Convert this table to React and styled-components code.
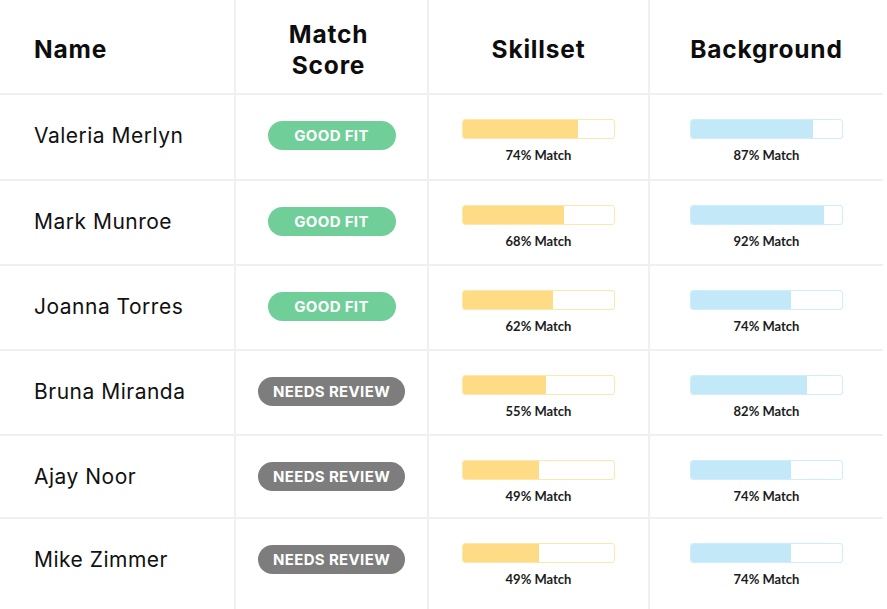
import React from "react";
import styled, { createGlobalStyle } from "styled-components";

const Global = createGlobalStyle`
  html, body { margin: 0; padding: 0; background: #ffffff; }
  body { font-family: "Inter", "Liberation Sans", sans-serif; color: #111111; }
`;

const Table = styled.div`
  display: grid;
  grid-template-columns: 234px 191px 219px 233px;
  grid-template-rows: 93px 84px 83px 83px 83px 81px 90px;
  gap: 2px;
  background: #f0f0f0;
  width: max-content;
`;

const HeadCell = styled.div`
  background: #ffffff;
  display: flex;
  align-items: center;
  justify-content: ${(p) => (p.$left ? "flex-start" : "center")};
  padding-left: ${(p) => (p.$left ? "34px" : "0")};
  padding-right: ${(p) => p.$shift || "0"};
  padding-top: 6px;
  font-size: 24.5px;
  font-weight: 700;
  letter-spacing: 0.8px;
  line-height: 31px;
  text-align: center;
  color: #0d0d0d;
`;

const NameCell = styled.div`
  background: #ffffff;
  padding: 28px 0 0 34px;
  font-size: 21px;
  line-height: 25px;
  letter-spacing: 0.5px;
  font-weight: 400;
  color: #111111;
`;

const Cell = styled.div`
  background: #ffffff;
  display: flex;
  flex-direction: column;
  align-items: center;
  padding-top: ${(p) => p.$pt};
`;

const Pill = styled.span`
  display: inline-flex;
  align-items: center;
  justify-content: center;
  height: 29px;
  min-width: 128px;
  padding: 0 15px;
  box-sizing: border-box;
  border-radius: 14.5px;
  background: ${(p) => (p.$good ? "#70cf98" : "#7d7d7d")};
  color: #ffffff;
  font-size: 15px;
  font-weight: 700;
  letter-spacing: 0.35px;
`;

const Track = styled.div`
  width: 153px;
  height: 20px;
  box-sizing: border-box;
  border: 1px solid ${(p) => (p.$tone === "yellow" ? "#fde7ad" : "#cdeefc")};
  border-radius: 3px;
  background: #ffffff;
  overflow: hidden;
`;

const Fill = styled.div`
  height: 100%;
  background: ${(p) => (p.$tone === "yellow" ? "#fedc85" : "#c3e8f8")};
`;

const BarLabel = styled.div`
  margin-top: 9px;
  font-family: "Lato", "Inter", sans-serif;
  font-size: 13px;
  font-weight: 700;
  line-height: 15px;
  color: #1c1c1c;
`;

const rows = [
  { name: "Valeria Merlyn", good: true, skill: 74, skillFill: 76, bg: 87, bgFill: 81 },
  { name: "Mark Munroe", good: true, skill: 68, skillFill: 67, bg: 92, bgFill: 88 },
  { name: "Joanna Torres", good: true, skill: 62, skillFill: 59.5, bg: 74, bgFill: 66 },
  { name: "Bruna Miranda", good: false, skill: 55, skillFill: 55, bg: 82, bgFill: 76.5 },
  { name: "Ajay Noor", good: false, skill: 49, skillFill: 50, bg: 74, bgFill: 66 },
  { name: "Mike Zimmer", good: false, skill: 49, skillFill: 50, bg: 74, bgFill: 66 },
];

function Bar({ tone, value, fill }) {
  return (
    <Cell $pt="24px">
      <Track $tone={tone}>
        <Fill $tone={tone} style={{ width: `${fill}%` }} />
      </Track>
      <BarLabel>{value}% Match</BarLabel>
    </Cell>
  );
}

export default function App() {
  return (
    <>
      <Global />
      <Table>
        <HeadCell $left>Name</HeadCell>
        <HeadCell $shift="6px">
          Match
          <br />
          Score
        </HeadCell>
        <HeadCell>Skillset</HeadCell>
        <HeadCell>Background</HeadCell>
        {rows.map((r) => (
          <React.Fragment key={r.name}>
            <NameCell>{r.name}</NameCell>
            <Cell $pt="26px">
              <Pill $good={r.good}>{r.good ? "GOOD FIT" : "NEEDS REVIEW"}</Pill>
            </Cell>
            <Bar tone="yellow" value={r.skill} fill={r.skillFill} />
            <Bar tone="blue" value={r.bg} fill={r.bgFill} />
          </React.Fragment>
        ))}
      </Table>
    </>
  );
}
